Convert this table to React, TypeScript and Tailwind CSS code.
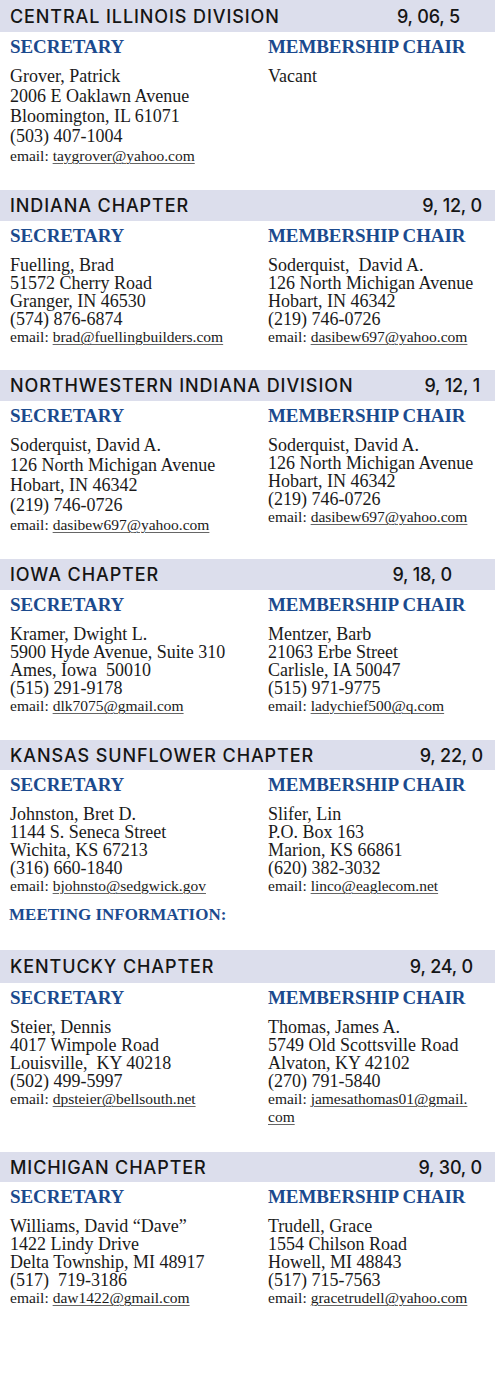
import React from "react";

type Person = { lines: string[]; email?: React.ReactNode };
type Section = {
  title: string;
  num: string;
  barClass: string;
  numClass: string;
  sec: Person;
  mem: Person;
  secLead: "20" | "18";
  memLead: "20" | "18";
  meeting?: boolean;
};

const serif = { fontFamily: '"Liberation Serif", "Times New Roman", serif' };
const sans = { fontFamily: 'Inter, "Open Sans", sans-serif' };

const sections: Section[] = [
  {
    title: "CENTRAL ILLINOIS DIVISION",
    num: "9, 06, 5",
    barClass: "h-[32px]",
    numClass: "pr-[35px]",
    secLead: "20",
    memLead: "20",
    sec: {
      lines: ["Grover, Patrick", "2006 E Oaklawn Avenue", "Bloomington, IL 61071", "(503) 407-1004"],
      email: "taygrover@yahoo.com",
    },
    mem: { lines: ["Vacant"] },
  },
  {
    title: "INDIANA CHAPTER",
    num: "9, 12, 0",
    barClass: "mt-[24px] h-[31px]",
    numClass: "pr-[13px]",
    secLead: "18",
    memLead: "18",
    sec: {
      lines: ["Fuelling, Brad", "51572 Cherry Road", "Granger, IN 46530", "(574) 876-6874"],
      email: "brad@fuellingbuilders.com",
    },
    mem: {
      lines: ["Soderquist,  David A.", "126 North Michigan Avenue", "Hobart, IN 46342", "(219) 746-0726"],
      email: "dasibew697@yahoo.com",
    },
  },
  {
    title: "NORTHWESTERN INDIANA DIVISION",
    num: "9, 12, 1",
    barClass: "mt-[24px] h-[31px]",
    numClass: "pr-[15px]",
    secLead: "20",
    memLead: "18",
    sec: {
      lines: ["Soderquist, David A.", "126 North Michigan Avenue", "Hobart, IN 46342", "(219) 746-0726"],
      email: "dasibew697@yahoo.com",
    },
    mem: {
      lines: ["Soderquist, David A.", "126 North Michigan Avenue", "Hobart, IN 46342", "(219) 746-0726"],
      email: "dasibew697@yahoo.com",
    },
  },
  {
    title: "IOWA CHAPTER",
    num: "9, 18, 0",
    barClass: "mt-[24px] h-[31px]",
    numClass: "pr-[43px]",
    secLead: "18",
    memLead: "18",
    sec: {
      lines: ["Kramer, Dwight L.", "5900 Hyde Avenue, Suite 310", "Ames, Iowa  50010", "(515) 291-9178"],
      email: "dlk7075@gmail.com",
    },
    mem: {
      lines: ["Mentzer, Barb", "21063 Erbe Street", "Carlisle, IA 50047", "(515) 971-9775"],
      email: "ladychief500@q.com",
    },
  },
  {
    title: "KANSAS SUNFLOWER CHAPTER",
    num: "9, 22, 0",
    barClass: "mt-[25px] h-[30px]",
    numClass: "pr-[12px]",
    secLead: "18",
    memLead: "18",
    meeting: true,
    sec: {
      lines: ["Johnston, Bret D.", "1144 S. Seneca Street", "Wichita, KS 67213", "(316) 660-1840"],
      email: "bjohnsto@sedgwick.gov",
    },
    mem: {
      lines: ["Slifer, Lin", "P.O. Box 163", "Marion, KS 66861", "(620) 382-3032"],
      email: "linco@eaglecom.net",
    },
  },
  {
    title: "KENTUCKY CHAPTER",
    num: "9, 24, 0",
    barClass: "mt-[25px] h-[33px]",
    numClass: "pr-[22px]",
    secLead: "18",
    memLead: "18",
    sec: {
      lines: ["Steier, Dennis", "4017 Wimpole Road", "Louisville,  KY 40218", "(502) 499-5997"],
      email: "dpsteier@bellsouth.net",
    },
    mem: {
      lines: ["Thomas, James A.", "5749 Old Scottsville Road", "Alvaton, KY 42102", "(270) 791-5840"],
      email: (
        <>
          jamesathomas01@gmail.
          <br />
          com
        </>
      ),
    },
  },
  {
    title: "MICHIGAN CHAPTER",
    num: "9, 30, 0",
    barClass: "mt-[26px] h-[30px]",
    numClass: "pr-[13px]",
    secLead: "18",
    memLead: "18",
    sec: {
      lines: ["Williams, David \u201cDave\u201d", "1422 Lindy Drive", "Delta Township, MI 48917", "(517)  719-3186"],
      email: "daw1422@gmail.com",
    },
    mem: {
      lines: ["Trudell, Grace", "1554 Chilson Road", "Howell, MI 48843", "(517) 715-7563"],
      email: "gracetrudell@yahoo.com",
    },
  },
];

function Column({ label, person, lead }: { label: string; person: Person; lead: "20" | "18" }) {
  const lineCls = lead === "20" ? "leading-[20px]" : "leading-[18px]";
  const bodyMt = lead === "20" ? "mt-[8px]" : "mt-[9px]";
  return (
    <div className="flex flex-col">
      <div
        className="mt-[4px] text-[19px] leading-[22px] font-bold tracking-[-0.1px] text-[#1b4a8e]"
        style={serif}
      >
        {label}
      </div>
      <div className={`${bodyMt} flex flex-col text-[18px] text-[#1a1a1a] ${lineCls}`} style={serif}>
        {person.lines.map((l, i) => (
          <div key={i} className="whitespace-pre">
            {l}
          </div>
        ))}
        {person.email && (
          <div className={`text-[15.5px] ${lineCls}`}>
            email:{" "}
            <span className="underline decoration-[#666] decoration-1 underline-offset-[2px]">
              {person.email}
            </span>
          </div>
        )}
      </div>
    </div>
  );
}

export default function App() {
  return (
    <div className="w-[495px] min-h-[1377px] bg-white">
      {sections.map((s, i) => (
        <div key={i} className="flex flex-col">
          <div
            className={`${s.barClass} flex items-center justify-between bg-[#dcdeec] pl-[10px] ${s.numClass} text-[18px] font-medium text-[#151515]`}
            style={sans}
          >
            <span className="tracking-[0.05em]">{s.title}</span>
            <span className="tracking-[-0.01em]">{s.num}</span>
          </div>
          <div className="grid grid-cols-[258px_1fr] pl-[10px]">
            <Column label="SECRETARY" person={s.sec} lead={s.secLead} />
            <Column label="MEMBERSHIP CHAIR" person={s.mem} lead={s.memLead} />
          </div>
          {s.meeting && (
            <div
              className="mt-[10px] pl-[9px] text-[17px] leading-[20px] font-bold text-[#1b4a8e]"
              style={serif}
            >
              MEETING INFORMATION:
            </div>
          )}
        </div>
      ))}
    </div>
  );
}
